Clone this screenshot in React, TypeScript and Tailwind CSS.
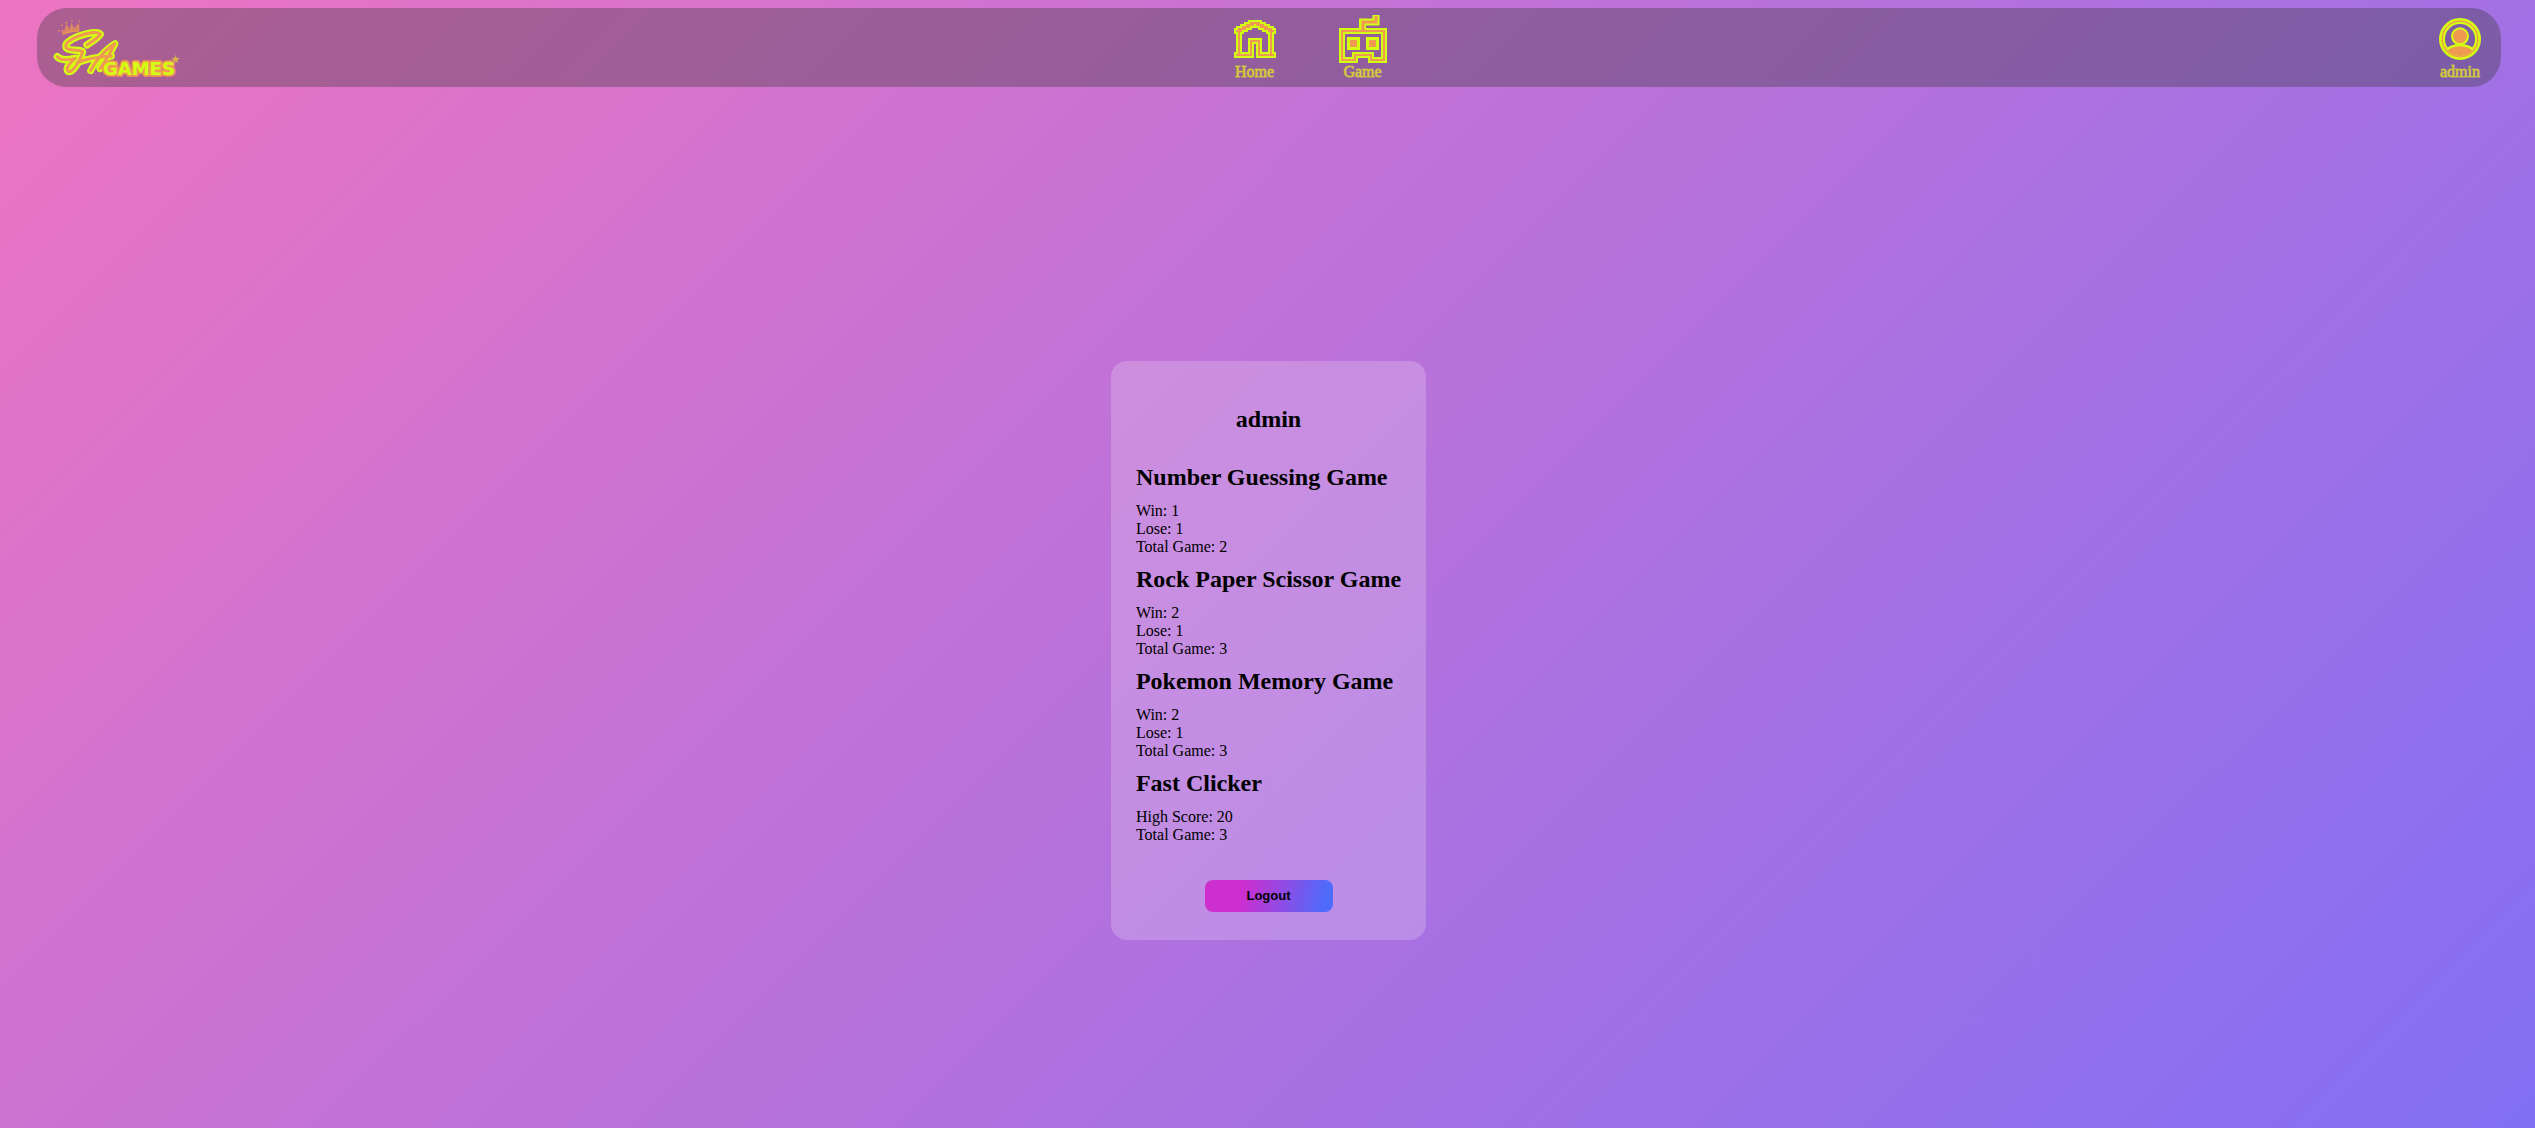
import type { ReactNode } from "react";

type Cell = [x: number, y: number, w: number, h: number];

const LIME = "#d4ff13";
const ORANGE = "#ef9a50";

const houseCells: Cell[] = [
  [8, 1, 5, 1],
  [6, 2, 4, 1],
  [11, 2, 4, 1],
  [4, 3, 4, 1],
  [13, 3, 4, 1],
  [2, 4, 4, 1],
  [15, 4, 4, 1],
  [1, 5, 3, 1],
  [17, 5, 3, 1],
  [2, 5, 1, 13],
  [18, 5, 1, 13],
  [1, 17, 8, 1],
  [12, 17, 8, 1],
  [8, 10, 1, 8],
  [12, 10, 1, 8],
  [8, 10, 5, 1],
];

function HomeIcon() {
  return (
    <svg width="42" height="48" viewBox="0 0 42 48" shapeRendering="crispEdges" aria-hidden="true">
      <g transform="translate(0 5) scale(2)">
        {houseCells.map(([x, y, w, h], i) => (
          <rect key={i} x={x - 1} y={y - 1} width={w + 2} height={h + 2} fill={LIME} />
        ))}
        {houseCells.map(([x, y, w, h], i) => (
          <rect key={i} x={x} y={y} width={w} height={h} fill={ORANGE} />
        ))}
      </g>
    </svg>
  );
}

function GameIcon() {
  const head = "M16 45H3V16H45V45H32V40H16Z";
  return (
    <svg width="48" height="48" viewBox="0 0 48 48" fill="none" aria-hidden="true">
      <path d="M23.500 16V7H37V0" stroke={LIME} strokeWidth="7" />
      <path d={head} stroke={LIME} strokeWidth="6" />
      <path d="M24 16V7H37V1" stroke={ORANGE} strokeWidth="3" />
      <path d={head} stroke={ORANGE} strokeWidth="2" />
      <path d="M8 22h13v13H8zM27 22h13v13H27z" fill={LIME} />
      <path d="M11 25h7v7h-7zM30 25h7v7h-7z" fill={ORANGE} />
    </svg>
  );
}

function ProfileIcon() {
  return (
    <svg width="42" height="48" viewBox="0 0 42 48" fill="none" aria-hidden="true">
      <clipPath id="profile-clip">
        <circle cx="21" cy="24" r="17" />
      </clipPath>
      <circle cx="21" cy="24" r="18" stroke={LIME} strokeWidth="6" />
      <g clipPath="url(#profile-clip)">
        <circle cx="21" cy="52" r="22" fill={ORANGE} stroke={LIME} strokeWidth="2.500" />
      </g>
      <circle cx="21" cy="24" r="17.800" stroke={ORANGE} strokeWidth="1.300" />
      <circle cx="21" cy="21.300" r="8" fill={ORANGE} stroke={LIME} strokeWidth="2" />
    </svg>
  );
}

function Logo() {
  const s =
    "M201 131C214 122 234 110 241 99C236 88 198 96 174 105C152 114 134 126 138 138C144 150 180 144 188 151C184 168 168 200 152 210C142 213 138 204 146 192C152 182 160 176 166 171C146 176 122 178 112 166";
  const a = "M212 208C224 182 256 144 285 127C276 146 258 178 240 202M172 184C200 172 244 166 274 164";
  return (
    <svg width="130" height="60" viewBox="93 50 390 180" fill="none" role="img" aria-label="SA Games">
      <path
        d="M128 101L124 84L133 88L139 68L149 84L155 64L162 81L177 65L179 88C162 90 144 94 128 101Z"
        fill={ORANGE}
        fillOpacity="0.700"
      />
      <path d="M129 99C144 92 162 89 177 90" stroke={ORANGE} strokeWidth="3" />
      <g fill={ORANGE}>
        <circle cx="117" cy="88" r="2.500" />
        <circle cx="126" cy="72" r="2.500" />
        <circle cx="139" cy="64" r="2.500" />
        <circle cx="156" cy="59" r="2.500" />
        <circle cx="179" cy="60" r="2.500" />
      </g>
      <g strokeLinecap="round" strokeLinejoin="round">
        <path d={s} stroke={LIME} strokeWidth="22" />
        <path d={a} stroke={LIME} strokeWidth="21" />
        <path d="M140 165L186 160L150 200Z" fill={LIME} />
        <path d={s} stroke={ORANGE} strokeWidth="9" />
        <path d={a} stroke={ORANGE} strokeWidth="9" />
      </g>
      <text
        x="249"
        y="221"
        className="font-['DejaVu_Sans',sans-serif] text-[54px] font-bold"
        fill={LIME}
        stroke={ORANGE}
        strokeWidth="11"
        strokeLinejoin="round"
        paintOrder="stroke"
      >
        GAMES
      </text>
      <path
        d="M467 160L470 170L480 170L472 176L475 186L467 180L459 185L461 176L454 170L464 169Z"
        fill="#d6b44c"
      />
    </svg>
  );
}

function NavItem({ label, children }: { label: string; children: ReactNode }) {
  return (
    <a
      href="#"
      className="flex flex-col items-center text-base leading-[18px] text-[#e2a84a] [-webkit-text-stroke:1px_#d4e62ba0]"
    >
      {children}
      <span>{label}</span>
    </a>
  );
}

const games = [
  { name: "Number Guessing Game", stats: ["Win: 1", "Lose: 1", "Total Game: 2"] },
  { name: "Rock Paper Scissor Game", stats: ["Win: 2", "Lose: 1", "Total Game: 3"] },
  { name: "Pokemon Memory Game", stats: ["Win: 2", "Lose: 1", "Total Game: 3"] },
  { name: "Fast Clicker", stats: ["High Score: 20", "Total Game: 3"] },
];

export default function App() {
  return (
    <div className="flex min-h-screen flex-col bg-[linear-gradient(135deg,#ed74c2,#826ff4)] pt-2 font-['Liberation_Serif',serif] text-black">
      <header className="mr-[34px] ml-[37px] flex h-[79px] items-center justify-between rounded-[30px] bg-[#363636]/35 pr-5 pl-3.5">
        <a href="#">
          <Logo />
        </a>
        <nav className="flex gap-[63px]">
          <NavItem label="Home">
            <HomeIcon />
          </NavItem>
          <NavItem label="Game">
            <GameIcon />
          </NavItem>
        </nav>
        <NavItem label="admin">
          <ProfileIcon />
        </NavItem>
      </header>

      <main className="flex flex-1 items-center justify-center pt-[86px] pl-[2px]">
        <section className="flex flex-col rounded-2xl bg-white/20 px-[25px] pt-11 pb-7">
          <h1 className="mb-[21px] text-center text-2xl leading-7 font-bold">admin</h1>
          {games.map((game) => (
            <article key={game.name}>
              <h2 className="mt-2.5 mb-[11px] text-2xl leading-[27px] font-bold">{game.name}</h2>
              {game.stats.map((stat) => (
                <p key={stat} className="text-base leading-[18px]">
                  {stat}
                </p>
              ))}
            </article>
          ))}
          <button
            type="button"
            className="mt-9 h-8 w-32 self-center rounded-lg bg-[linear-gradient(103deg,#cc2ecf_30%,#4d6cfb_93%)] font-['Liberation_Sans',sans-serif] text-[13px] font-bold"
          >
            Logout
          </button>
        </section>
      </main>
    </div>
  );
}
